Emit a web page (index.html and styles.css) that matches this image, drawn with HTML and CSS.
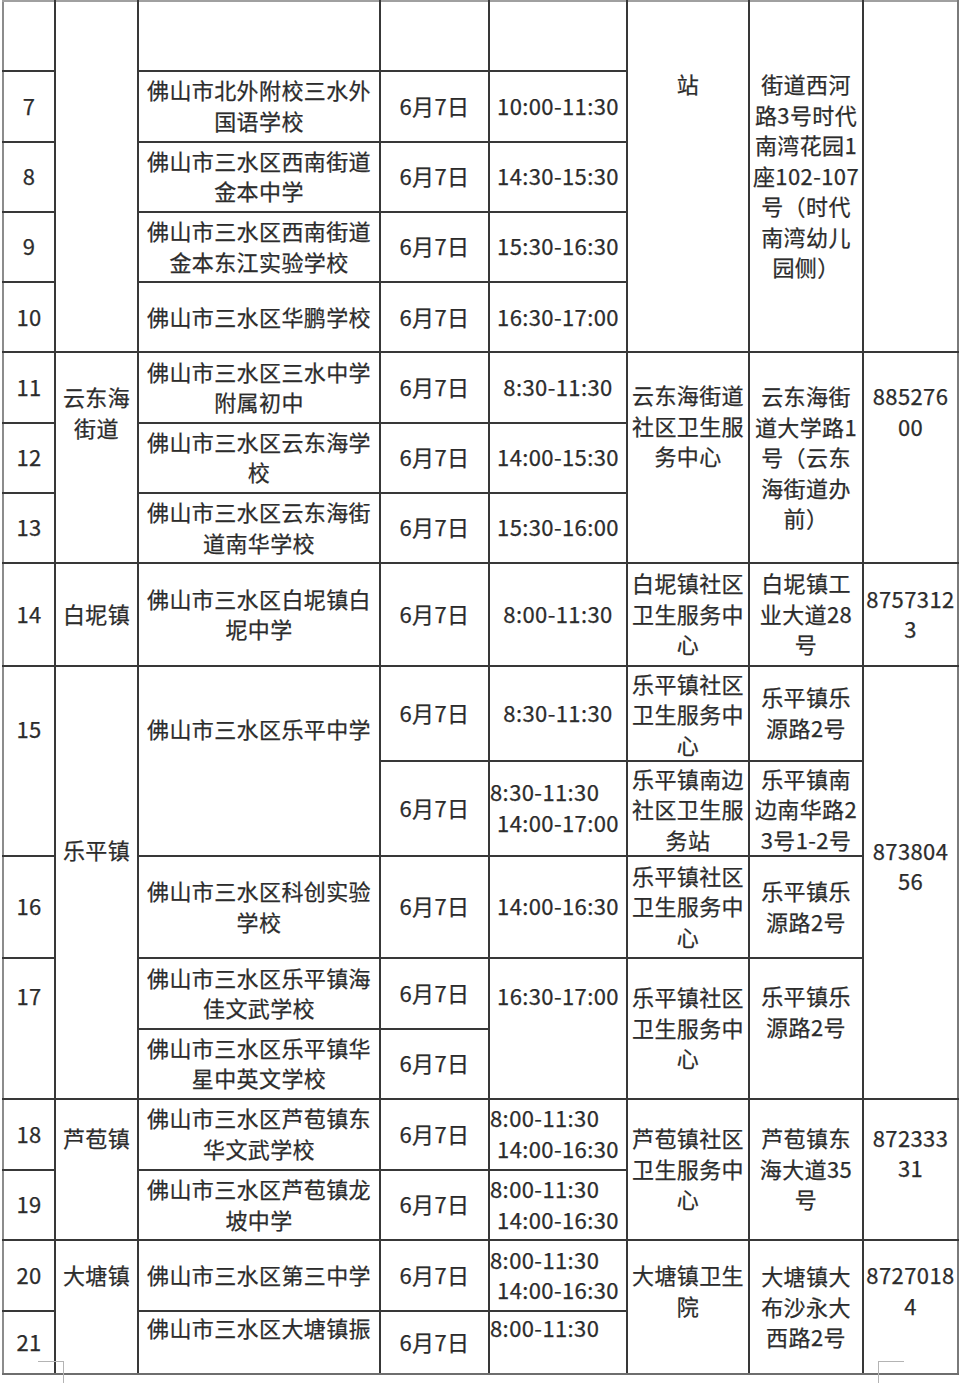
FILE: index.html
```html
<!DOCTYPE html>
<html lang="zh-CN">
<head>
<meta charset="utf-8">
<title>三水区学校接种安排</title>
<link rel="stylesheet" href="styles.css">
</head>
<body>
<div class="sheet">
<table class="grid">
<colgroup>
<col class="c-no"><col class="c-area"><col class="c-school"><col class="c-date"><col class="c-time"><col class="c-site"><col class="c-addr"><col class="c-tel">
</colgroup>
<tbody>
<tr class="h-a">
<td class="edge-l edge-t"></td>
<td rowspan="5" class="edge-t"></td>
<td class="edge-t"></td>
<td class="edge-t"></td>
<td class="edge-t"></td>
<td rowspan="5" class="edge-t top pad-66">站</td>
<td rowspan="5" class="edge-t top pad-66">街道西河<br>路3号时代<br>南湾花园1<br>座102-107<br>号（时代<br>南湾幼儿<br>园侧）</td>
<td rowspan="5" class="edge-t edge-r"></td>
</tr>
<tr class="h-a">
<td class="edge-l">7</td>
<td>佛山市北外附校三水外<br>国语学校</td>
<td>6月7日</td>
<td>10:00-11:30</td>
</tr>
<tr class="h-a">
<td class="edge-l">8</td>
<td>佛山市三水区西南街道<br>金本中学</td>
<td>6月7日</td>
<td>14:30-15:30</td>
</tr>
<tr class="h-a">
<td class="edge-l">9</td>
<td>佛山市三水区西南街道<br>金本东江实验学校</td>
<td>6月7日</td>
<td>15:30-16:30</td>
</tr>
<tr class="h-a">
<td class="edge-l">10</td>
<td>佛山市三水区华鹏学校</td>
<td>6月7日</td>
<td>16:30-17:00</td>
</tr>
<tr class="h-a">
<td class="edge-l">11</td>
<td rowspan="3" class="top pad-28">云东海<br>街道</td>
<td>佛山市三水区三水中学<br>附属初中</td>
<td>6月7日</td>
<td>8:30-11:30</td>
<td rowspan="3" class="top pad-26">云东海街道<br>社区卫生服<br>务中心</td>
<td rowspan="3">云东海街<br>道大学路1<br>号（云东<br>海街道办<br>前）</td>
<td rowspan="3" class="edge-r top pad-27">885276<br>00</td>
</tr>
<tr class="h-a">
<td class="edge-l">12</td>
<td>佛山市三水区云东海学<br>校</td>
<td>6月7日</td>
<td>14:00-15:30</td>
</tr>
<tr class="h-a">
<td class="edge-l">13</td>
<td>佛山市三水区云东海街<br>道南华学校</td>
<td>6月7日</td>
<td>15:30-16:00</td>
</tr>
<tr class="h-c">
<td class="edge-l">14</td>
<td>白坭镇</td>
<td>佛山市三水区白坭镇白<br>坭中学</td>
<td>6月7日</td>
<td>8:00-11:30</td>
<td>白坭镇社区<br>卫生服务中<br>心</td>
<td>白坭镇工<br>业大道28<br>号</td>
<td class="edge-r">8757312<br>3</td>
</tr>
<tr class="h-b">
<td rowspan="2" class="edge-l top pad-46">15</td>
<td rowspan="5" class="top pad-167">乐平镇</td>
<td rowspan="2" class="top pad-46">佛山市三水区乐平中学</td>
<td>6月7日</td>
<td>8:30-11:30</td>
<td class="tight">乐平镇社区<br>卫生服务中<br>心</td>
<td>乐平镇乐<br>源路2号</td>
<td rowspan="5" class="edge-r top pad-168">873804<br>56</td>
</tr>
<tr class="h-b">
<td>6月7日</td>
<td class="pair"><span class="first">8:30-11:30</span><span class="second">14:00-17:00</span></td>
<td class="tight">乐平镇南边<br>社区卫生服<br>务站</td>
<td class="tight">乐平镇南<br>边南华路2<br>3号1-2号</td>
</tr>
<tr class="h-c">
<td class="edge-l">16</td>
<td>佛山市三水区科创实验<br>学校</td>
<td>6月7日</td>
<td>14:00-16:30</td>
<td>乐平镇社区<br>卫生服务中<br>心</td>
<td>乐平镇乐<br>源路2号</td>
</tr>
<tr class="h-a">
<td rowspan="2" class="edge-l top pad-21">17</td>
<td>佛山市三水区乐平镇海<br>佳文武学校</td>
<td>6月7日</td>
<td rowspan="2" class="top pad-21">16:30-17:00</td>
<td rowspan="2">乐平镇社区<br>卫生服务中<br>心</td>
<td rowspan="2" class="top pad-21">乐平镇乐<br>源路2号</td>
</tr>
<tr class="h-a">
<td>佛山市三水区乐平镇华<br>星中英文学校</td>
<td>6月7日</td>
</tr>
<tr class="h-d">
<td class="edge-l">18</td>
<td rowspan="2" class="top pad-22">芦苞镇</td>
<td>佛山市三水区芦苞镇东<br>华文武学校</td>
<td>6月7日</td>
<td class="pair"><span class="first">8:00-11:30</span><span class="second">14:00-16:30</span></td>
<td rowspan="2">芦苞镇社区<br>卫生服务中<br>心</td>
<td rowspan="2">芦苞镇东<br>海大道35<br>号</td>
<td rowspan="2" class="edge-r top pad-22">872333<br>31</td>
</tr>
<tr class="h-d">
<td class="edge-l">19</td>
<td>佛山市三水区芦苞镇龙<br>坡中学</td>
<td>6月7日</td>
<td class="pair"><span class="first">8:00-11:30</span><span class="second">14:00-16:30</span></td>
</tr>
<tr class="h-e">
<td class="edge-l">20</td>
<td rowspan="2" class="edge-b top pad-18">大塘镇</td>
<td>佛山市三水区第三中学</td>
<td>6月7日</td>
<td class="pair"><span class="first">8:00-11:30</span><span class="second">14:00-16:30</span></td>
<td rowspan="2" class="edge-b top pad-18">大塘镇卫生<br>院</td>
<td rowspan="2" class="edge-b">大塘镇大<br>布沙永大<br>西路2号</td>
<td rowspan="2" class="edge-b edge-r top pad-18">8727018<br>4</td>
</tr>
<tr class="h-f">
<td class="edge-l edge-b">21</td>
<td class="edge-b top pad-0">佛山市三水区大塘镇振</td>
<td class="edge-b">6月7日</td>
<td class="edge-b top pad-0 pair"><span class="first">8:00-11:30</span></td>
</tr>
</tbody>
</table>
<div class="mark mark-left"></div>
<div class="mark mark-right"></div>
</div>
</body>
</html>
```

FILE: styles.css
```css
html, body {
  margin: 0;
  padding: 0;
  background: #ffffff;
}

.sheet {
  position: relative;
  width: 960px;
  height: 1383px;
  overflow: hidden;
  padding: 0 0 0 2px;
  box-sizing: border-box;
}

.grid {
  border-collapse: collapse;
  table-layout: fixed;
  width: 955px;
  font-family: "Noto Sans CJK SC", "Noto Sans", sans-serif;
  font-weight: 400;
  font-size: 22px;
  letter-spacing: 0.4px;
  line-height: 30.5px;
  color: #2c2c2c;
  -webkit-text-stroke: 0.25px #2c2c2c;
}

.c-no { width: 52px; }
.c-area { width: 83px; }
.c-school { width: 242px; }
.c-date { width: 109px; }
.c-time { width: 138px; }
.c-site { width: 122px; }
.c-addr { width: 114px; }
.c-tel { width: 95px; }

.grid td {
  border: 2px solid #383838;
  padding: 0 1px 3px;
  text-align: center;
  vertical-align: middle;
  white-space: nowrap;
  overflow: hidden;
}

.grid td.tight { padding-bottom: 0; }

.h-a { height: 70.3px; }
.h-b { height: 95px; }
.h-c { height: 102.5px; }
.h-d { height: 70.7px; }
.h-e { height: 71px; }
.h-f { height: 63px; }

.grid td.edge-l { border-left-color: #8c8c8c; }
.grid td.edge-r { border-right-color: #7a7a7a; }
.grid td.edge-t { border-top-color: #a0a0a0; }
.grid td.edge-b { border-bottom-color: #6e6e6e; }

.grid td.top { vertical-align: top; }
.grid td.pad-0 { padding-top: 0; }
.grid td.pad-18 { padding-top: 18px; }
.grid td.pad-21 { padding-top: 21px; }
.grid td.pad-22 { padding-top: 22px; }
.grid td.pad-26 { padding-top: 26px; }
.grid td.pad-27 { padding-top: 27px; }
.grid td.pad-28 { padding-top: 28px; }
.grid td.pad-46 { padding-top: 46px; }
.grid td.pad-66 { padding-top: 66px; }
.grid td.pad-167 { padding-top: 167px; }
.grid td.pad-168 { padding-top: 168px; }

.grid td.pair { padding-left: 0; padding-right: 0; }
.pair .first { display: block; text-align: left; }
.pair .second { display: block; text-align: center; }

.mark {
  position: absolute;
  border: 0 solid #b4b4b4;
}

.mark-left {
  left: 38px;
  top: 1361px;
  width: 25px;
  height: 22px;
  border-top-width: 1px;
  border-right-width: 1px;
}

.mark-right {
  left: 878px;
  top: 1361px;
  width: 25px;
  height: 22px;
  border-top-width: 1px;
  border-left-width: 1px;
}
```
